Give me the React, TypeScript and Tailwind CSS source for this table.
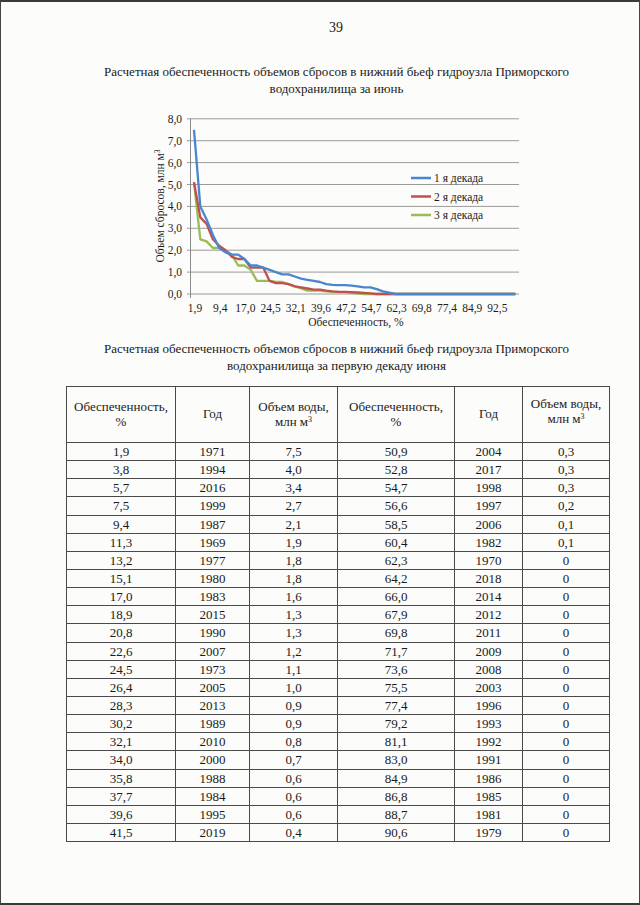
import React from "react";

const left: [string, string, string][] = [
  ["1,9", "1971", "7,5"], ["3,8", "1994", "4,0"], ["5,7", "2016", "3,4"], ["7,5", "1999", "2,7"],
  ["9,4", "1987", "2,1"], ["11,3", "1969", "1,9"], ["13,2", "1977", "1,8"], ["15,1", "1980", "1,8"],
  ["17,0", "1983", "1,6"], ["18,9", "2015", "1,3"], ["20,8", "1990", "1,3"], ["22,6", "2007", "1,2"],
  ["24,5", "1973", "1,1"], ["26,4", "2005", "1,0"], ["28,3", "2013", "0,9"], ["30,2", "1989", "0,9"],
  ["32,1", "2010", "0,8"], ["34,0", "2000", "0,7"], ["35,8", "1988", "0,6"], ["37,7", "1984", "0,6"],
  ["39,6", "1995", "0,6"], ["41,5", "2019", "0,4"],
];
const right: [string, string, string][] = [
  ["50,9", "2004", "0,3"], ["52,8", "2017", "0,3"], ["54,7", "1998", "0,3"], ["56,6", "1997", "0,2"],
  ["58,5", "2006", "0,1"], ["60,4", "1982", "0,1"], ["62,3", "1970", "0"], ["64,2", "2018", "0"],
  ["66,0", "2014", "0"], ["67,9", "2012", "0"], ["69,8", "2011", "0"], ["71,7", "2009", "0"],
  ["73,6", "2008", "0"], ["75,5", "2003", "0"], ["77,4", "1996", "0"], ["79,2", "1993", "0"],
  ["81,1", "1992", "0"], ["83,0", "1991", "0"], ["84,9", "1986", "0"], ["86,8", "1985", "0"],
  ["88,7", "1981", "0"], ["90,6", "1979", "0"],
];

const pad = (arr: number[]) => {
  const out = arr.slice();
  while (out.length < 52) out.push(0);
  return out;
};

const blue = pad([7.5, 4.0, 3.4, 2.7, 2.1, 1.9, 1.8, 1.8, 1.6, 1.3, 1.3, 1.2, 1.1, 1.0, 0.9, 0.9, 0.8, 0.7, 0.65, 0.6, 0.55, 0.45, 0.42, 0.4, 0.4, 0.38, 0.35, 0.3, 0.3, 0.22, 0.12, 0.06, 0]);
const red = pad([5.1, 3.5, 3.2, 2.5, 2.2, 2.0, 1.7, 1.6, 1.6, 1.2, 1.2, 1.2, 0.6, 0.5, 0.5, 0.45, 0.35, 0.3, 0.25, 0.2, 0.2, 0.15, 0.12, 0.1, 0.1, 0.08, 0.07, 0.05, 0.03, 0]);
const green = pad([5.1, 2.5, 2.4, 2.1, 2.1, 2.0, 1.8, 1.3, 1.3, 1.1, 0.6, 0.6, 0.6, 0.55, 0.55, 0.45, 0.35, 0.25, 0.15, 0.15, 0.15, 0.12, 0.1, 0.08, 0.08, 0.05, 0.03, 0]);

const X0 = 193;
const DX = 6.3;
const Y0 = 295;
const DY = 21.9;
const px = (k: number) => X0 + k * DX;
const py = (v: number) => Y0 - v * DY;
const pts = (arr: number[]) => arr.map((v, i) => `${px(i).toFixed(1)},${py(v).toFixed(1)}`).join(" ");

const xLabels = ["1,9", "9,4", "17,0", "24,5", "32,1", "39,6", "47,2", "54,7", "62,3", "69,8", "77,4", "84,9", "92,5"];
const yLabels = ["0,0", "1,0", "2,0", "3,0", "4,0", "5,0", "6,0", "7,0", "8,0"];
const FF = "Liberation Serif, Times New Roman, serif";

function Chart() {
  return (
    <svg width={640} height={225} className="block">
      <g transform="translate(0,-110)" fontFamily={FF} fill="#1c1c1c">
        {yLabels.map((l, i) => (
          <g key={l}>
            <line x1={186} x2={518} y1={py(i)} y2={py(i)} stroke="#9a9a9a" strokeWidth={1} />
            <text x={181} y={py(i) + 4} fontSize={11.5} textAnchor="end" fontFamily={FF}>{l}</text>
          </g>
        ))}
        <line x1={189.5} x2={189.5} y1={py(8)} y2={py(0) + 4} stroke="#8a8a8a" strokeWidth={1} />
        {xLabels.map((l, i) => (
          <text key={l} x={px(i * 4) + 1} y={313} fontSize={11.5} textAnchor="middle" fontFamily={FF}>{l}</text>
        ))}
        <text x={355} y={327} fontSize={11.5} textAnchor="middle" fontFamily={FF}>Обеспеченность, %</text>
        <text transform="translate(163,207) rotate(-90)" fontSize={11.5} textAnchor="middle" fontFamily={FF}>
          Объем сбросов, млн м<tspan fontSize={7.5} dy={-4}>3</tspan>
        </text>
        <polyline points={pts(green)} fill="none" stroke="#9bbb59" strokeWidth={2.3} strokeLinejoin="round" />
        <polyline points={pts(red)} fill="none" stroke="#c0504d" strokeWidth={2.3} strokeLinejoin="round" />
        <polyline points={pts(blue)} fill="none" stroke="#4a86d0" strokeWidth={2.3} strokeLinejoin="round" />
        {[
          ["#4a86d0", "1 я декада", 179],
          ["#c0504d", "2 я декада", 197.5],
          ["#9bbb59", "3 я декада", 216],
        ].map(([c, t, y]) => (
          <g key={t as string}>
            <line x1={410} x2={430} y1={y as number} y2={y as number} stroke={c as string} strokeWidth={2.5} />
            <text x={433} y={(y as number) + 4} fontSize={11.5} fontFamily={FF}>{t}</text>
          </g>
        ))}
      </g>
    </svg>
  );
}

const cell = "border border-[#4a4a4a] text-center p-0";
const head = "border border-[#4a4a4a] text-center font-normal px-0 pt-0 pb-[2px] align-middle";

export default function App() {
  return (
    <div
      className="w-[640px] h-[905px] overflow-hidden bg-[#fcfcfa] text-[#1a1a1a] border-t-2 border-b-2 border-l border-r border-t-[#3a3a3a] border-b-[#3a3a3a] border-l-[#444] border-r-[#444]"
      style={{ fontFamily: '"Liberation Serif", "Times New Roman", serif' }}
    >
      <div className="text-center text-[14px] leading-[16px] pt-[18px] pl-[32px]">39</div>
      <div className="text-center text-[13px] leading-[17px] mt-[27px] pl-[33px]">
        <div>Расчетная обеспеченность объемов сбросов в нижний бьеф гидроузла Приморского</div>
        <div>водохранилища за июнь</div>
      </div>
      <div className="mt-[12px]">
        <Chart />
      </div>
      <div className="text-center text-[13px] leading-[17px] mt-[6px] pl-[33px]">
        <div>Расчетная обеспеченность объемов сбросов в нижний бьеф гидроузла Приморского</div>
        <div>водохранилища за первую декаду июня</div>
      </div>
      <div className="ml-[65px] mt-[12px]">
        <table className="border-collapse text-[13px] leading-[15px]">
          <colgroup>
            <col className="w-[109px]" />
            <col className="w-[74px]" />
            <col className="w-[88px]" />
            <col className="w-[117px]" />
            <col className="w-[68px]" />
            <col className="w-[87px]" />
          </colgroup>
          <thead>
            <tr className="h-[56px]">
              <th className={head}>Обеспеченность,<br />%</th>
              <th className={head}>Год</th>
              <th className={head}>Объем воды,<br />млн м<sup className="text-[8px]">3</sup></th>
              <th className={head}>Обеспеченность,<br />%</th>
              <th className={head}>Год</th>
              <th className={`${head} pb-[8px]`}>Объем воды,<br />млн м<sup className="text-[8px]">3</sup></th>
            </tr>
          </thead>
          <tbody>
            {left.map((r, i) => (
              <tr key={i} className="h-[18.15px]">
                <td className={cell}>{r[0]}</td>
                <td className={cell}>{r[1]}</td>
                <td className={cell}>{r[2]}</td>
                <td className={cell}>{right[i][0]}</td>
                <td className={cell}>{right[i][1]}</td>
                <td className={cell}>{right[i][2]}</td>
              </tr>
            ))}
          </tbody>
        </table>
      </div>
    </div>
  );
}
